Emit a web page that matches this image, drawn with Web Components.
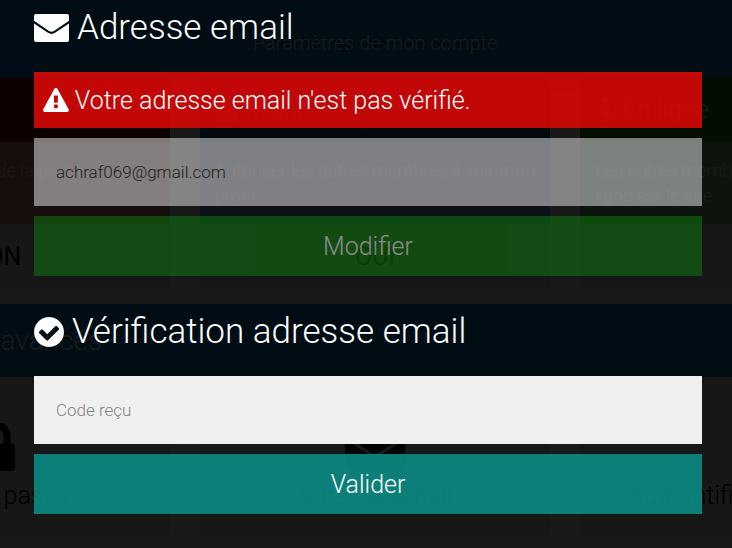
<!DOCTYPE html>
<html lang="fr">
<head>
<meta charset="utf-8">
<meta name="viewport" content="width=device-width, initial-scale=1">
<title>Adresse email</title>
<style>
    body {
        margin: 0;
        background: #fff;
        font-family: Roboto, "Liberation Sans", sans-serif;
        font-weight: 300;
    }
</style>
</head>
<body>
<settings-page>
    <page-banner>Paramètres de mon compte</page-banner>
    <card-row>
        <setting-card style="--head: #780000; --body: #f08282; --note: #dceee6">
            <span slot="title">Emails</span>
            <span slot="text">Recevoir des emails de la part des autres membres</span>
            <span slot="state">NON</span>
        </setting-card>
        <setting-card style="--head: #005082; --body: #78aaf0">
            <web-icon slot="title" name="user"></web-icon>
            <span slot="title">Profil</span>
            <span slot="text">Autoriser les autres membres à voir mon profil</span>
            <span slot="state">OUI</span>
        </setting-card>
        <setting-card style="--head: #1e8200; --body: #82c882">
            <web-icon slot="title" name="street"></web-icon>
            <span slot="title">En ligne</span>
            <span slot="text">Les autres membres me voient en<br>ligne sur le site</span>
            <span slot="state">OUI</span>
        </setting-card>
    </card-row>
    <page-banner class="large">Paramètres avancés</page-banner>
    <card-row>
        <link-card><web-icon slot="icon" name="lock"></web-icon>Mot de passe</link-card>
        <link-card><web-icon slot="icon" name="envelope"></web-icon>Adresse email</link-card>
        <link-card><web-icon slot="icon" name="lock"></web-icon>Authentification double</link-card>
    </card-row>

    <modal-overlay slot="modal">
        <modal-section>
            <web-icon slot="title" name="envelope"></web-icon>
            <span slot="title">Adresse email</span>
            <alert-message>Votre adresse email n'est pas vérifié.</alert-message>
            <text-field type="email" label="Adresse email" value="achraf069@gmail.com" disabled></text-field>
            <action-button color="#0d7f0f" disabled>Modifier</action-button>
        </modal-section>
        <modal-section>
            <web-icon slot="title" name="check"></web-icon>
            <span slot="title">Vérification adresse email</span>
            <text-field type="text" label="Code reçu"></text-field>
            <action-button color="rgba(11, 140, 131, 0.9)">Valider</action-button>
        </modal-section>
    </modal-overlay>
</settings-page>

<script>
const icons = {
    envelope: ['0 0 35 28', 'M0 9.5 14 18.8Q17.5 21 21 18.8L35 9.5V26a2 2 0 0 1-2 2H2a2 2 0 0 1-2-2zM2 0H33a2 2 0 0 1 2 2V6.8L20 17Q17.5 18.6 15 17L0 6.8V2a2 2 0 0 1 2-2z'],
    check: ['128 128 1536 1536', 'M1412 734q0-28-18-46l-91-90q-19-19-45-19t-45 19l-408 407-226-226q-19-19-45-19t-45 19l-91 90q-18 18-18 46 0 27 18 45l362 362q19 19 45 19 27 0 46-19l543-543q18-18 18-45zm252 162q0 209-103 385.5t-279.5 279.5-385.5 103-385.5-103-279.5-279.5-103-385.5 103-385.5 279.5-279.5 385.5-103 385.5 103 279.5 279.5 103 385.5z'],
    warning: ['0 0 1792 1664', 'M1024 1375v-190q0-14-9.5-23.5t-22.5-9.5h-192q-13 0-22.5 9.5t-9.5 23.5v190q0 14 9.5 23.5t22.5 9.5h192q13 0 22.5-9.5t9.5-23.5zm-2-374l18-459q0-12-10-19-13-11-24-11h-220q-11 0-24 11-10 7-10 21l17 457q0 10 10 16.5t24 6.5h185q14 0 23.5-6.5t10.5-16.5zm-14-934l768 1408q35 63-2 126-17 29-46.5 46t-63.5 17h-1536q-34 0-63.5-17t-46.5-46q-37-63-2-126l768-1408q17-31 47-49t65-18 65 18 47 49z'],
    lock: ['320 192 1152 1344', 'M640 768h512v-192q0-106-75-181t-181-75-181 75-75 181v192zm832 96v576q0 40-28 68t-68 28h-960q-40 0-68-28t-28-68v-576q0-40 28-68t68-28h32v-192q0-184 132-316t316-132 316 132 132 316v192h32q40 0 68 28t28 68z'],
    user: ['0 0 20 22', 'M10 0a5 5.5 0 0 1 0 11a5 5.5 0 0 1 0-11zM5 11Q10 14 15 11Q20 12 20 19Q20 22 17 22H3Q0 22 0 19Q0 12 5 11z'],
    street: ['0 0 20 25', 'M10 0a3.2 3.2 0 0 1 0 6.4a3.2 3.2 0 0 1 0-6.4zM7 7H13Q14.5 7 14.5 9V14L13 15V20Q13 21 12 21H8Q7 21 7 20V15L5.500 14V9Q5.500 7 7 7zM6 17.500V19.300C3 19.800 2 20.500 2 21C2 22 5 23 10 23S18 22 18 21C18 20.500 17 19.800 14 19.300V17.500C18 18 20 19.500 20 21C20 23.500 16 25 10 25S0 23.500 0 21C0 19.500 2 18 6 17.500z']
};

// attaches an open shadow root filled with the given markup
function shadow(host, html) {
    const template = document.createElement('template');
    template.innerHTML = html;
    host.attachShadow({ mode: 'open' });
    host.shadowRoot.appendChild(template.content.cloneNode(true));
}

class WebIcon extends HTMLElement {
    constructor() {
        super();
        const [box, path] = icons[this.getAttribute('name')];
        shadow(this, `
            <style>
                :host {
                    display: inline-flex;
                    flex: none;
                }
                svg {
                    display: block;
                    height: var(--icon-size, 24px);
                    fill: currentColor;
                }
            </style>
            <svg viewBox="${box}" aria-hidden="true"><path fill-rule="evenodd" d="${path}"/></svg>
        `);
    }
}

class SettingsPage extends HTMLElement {
    constructor() {
        super();
        shadow(this, `
            <style>
                :host {
                    display: block;
                    position: relative;
                    overflow: hidden;
                    min-height: 100vh;
                }
                main {
                    display: flex;
                    flex-direction: column;
                    gap: 15px;
                    padding-left: 18px;
                }
                .top {
                    height: 2px;
                    background: #326eb4;
                }
            </style>
            <div class="top"></div>
            <main><slot></slot></main>
            <slot name="modal"></slot>
        `);
    }
}

class PageBanner extends HTMLElement {
    constructor() {
        super();
        shadow(this, `
            <style>
                :host {
                    display: block;
                    margin: 0 0 -30px -18px;
                    padding: 26px 0 34px 18px;
                    background: #0082c8;
                    color: #fff;
                    font-size: 20px;
                    line-height: 30px;
                    text-align: center;
                }
                :host(.large) {
                    padding: 17px 0 31px;
                    font-size: 28px;
                    line-height: 40px;
                }
                h2 {
                    margin: 0;
                    font: inherit;
                }
                :host(.large) h2 {
                    width: 102px;
                    display: flex;
                    justify-content: flex-end;
                    white-space: nowrap;
                }
            </style>
            <h2><slot></slot></h2>
        `);
    }
}

class CardRow extends HTMLElement {
    constructor() {
        super();
        shadow(this, `
            <style>
                :host {
                    display: grid;
                    grid-template-columns: repeat(3, 350px);
                    justify-content: center;
                    gap: 30px;
                }
            </style>
            <slot></slot>
        `);
    }
}

class SettingCard extends HTMLElement {
    constructor() {
        super();
        shadow(this, `
            <style>
                :host {
                    display: block;
                    background: #e6e6e6;
                }
                header {
                    --icon-size: 25px;
                    display: flex;
                    align-items: center;
                    gap: 8px;
                    padding: 0 15px;
                    background: var(--head);
                    color: #fff;
                    font-size: 25px;
                    line-height: 65px;
                }
                p {
                    margin: 0;
                    padding: 16px 15px;
                    background: var(--body);
                    color: var(--note, #fff);
                    font-size: 18px;
                    line-height: 25px;
                }
                footer {
                    color: #000;
                    font-size: 25px;
                    font-weight: 400;
                    line-height: 65px;
                    text-align: center;
                }
            </style>
            <header><slot name="title"></slot></header>
            <p><slot name="text"></slot></p>
            <footer><slot name="state"></slot></footer>
        `);
    }
}

class LinkCard extends HTMLElement {
    constructor() {
        super();
        shadow(this, `
            <style>
                :host {
                    --icon-size: 48px;
                    display: flex;
                    flex-direction: column;
                    align-items: center;
                    gap: 10px;
                    padding: 46px 0 24px;
                    background: #e6e6e6;
                    color: #000;
                    font-size: 25px;
                    line-height: 30px;
                }
            </style>
            <slot name="icon"></slot>
            <span><slot></slot></span>
        `);
    }
}

class ModalOverlay extends HTMLElement {
    constructor() {
        super();
        shadow(this, `
            <style>
                :host {
                    position: absolute;
                    inset: 0;
                    display: flex;
                    flex-direction: column;
                    gap: 36px;
                    padding: 8px 30px 34px 34px;
                    background: rgba(0, 0, 0, 0.9);
                    color: #fff;
                }
            </style>
            <slot></slot>
        `);
    }
}

class ModalSection extends HTMLElement {
    constructor() {
        super();
        shadow(this, `
            <style>
                :host {
                    display: flex;
                    flex-direction: column;
                    gap: 10px;
                }
                h1 {
                    --icon-size: 28px;
                    display: flex;
                    align-items: center;
                    gap: 8px;
                    margin: 0 0 14px;
                    font-size: 35px;
                    font-weight: 300;
                    line-height: 40px;
                }
            </style>
            <h1><slot name="title"></slot></h1>
            <slot></slot>
        `);
        // the round glyph is a little taller than the envelope
        if (this.querySelector('[name="check"]')) {
            this.shadowRoot.querySelector('h1').style.setProperty('--icon-size', '30px');
        }
    }
}

class AlertMessage extends HTMLElement {
    constructor() {
        super();
        shadow(this, `
            <style>
                :host {
                    --icon-size: 24px;
                    display: flex;
                    align-items: center;
                    gap: 6px;
                    padding: 8px 9px;
                    background: rgba(215, 8, 8, 0.9);
                    font-size: 25px;
                    line-height: 40px;
                }
                span {
                    margin: 1px 0 -1px;
                }
            </style>
            <web-icon name="warning"></web-icon>
            <span role="alert"><slot></slot></span>
        `);
    }
}

class TextField extends HTMLElement {
    constructor() {
        super();
        shadow(this, `
            <style>
                :host {
                    display: block;
                }
                input {
                    display: block;
                    box-sizing: border-box;
                    width: 100%;
                    height: 68px;
                    padding: 0 22px;
                    border: 0;
                    border-radius: 0;
                    background: #f0f0f0;
                    color: #000;
                    font: inherit;
                    font-size: 17px;
                }
                input:disabled {
                    background: rgba(240, 240, 240, 0.5);
                    color: #202020;
                }
                input::placeholder {
                    color: #858585;
                }
            </style>
            <input>
        `);
        const input = this.shadowRoot.querySelector('input');
        const label = this.getAttribute('label');
        input.type = this.getAttribute('type');
        input.placeholder = label;
        input.setAttribute('aria-label', label);
        input.value = this.getAttribute('value') || '';
        input.disabled = this.hasAttribute('disabled');
    }
}

class ActionButton extends HTMLElement {
    constructor() {
        super();
        shadow(this, `
            <style>
                :host {
                    display: block;
                }
                button {
                    display: block;
                    width: 100%;
                    padding: 11px 10px 9px;
                    border: 0;
                    background: ${this.getAttribute('color')};
                    color: #fff;
                    font: inherit;
                    font-size: 25px;
                    line-height: 40px;
                }
                button:disabled {
                    opacity: 0.5;
                }
            </style>
            <button type="button"><slot></slot></button>
        `);
        this.shadowRoot.querySelector('button').disabled = this.hasAttribute('disabled');
    }
}

window.customElements.define('web-icon', WebIcon);
window.customElements.define('settings-page', SettingsPage);
window.customElements.define('page-banner', PageBanner);
window.customElements.define('card-row', CardRow);
window.customElements.define('setting-card', SettingCard);
window.customElements.define('link-card', LinkCard);
window.customElements.define('modal-overlay', ModalOverlay);
window.customElements.define('modal-section', ModalSection);
window.customElements.define('alert-message', AlertMessage);
window.customElements.define('text-field', TextField);
window.customElements.define('action-button', ActionButton);
</script>
</body>
</html>
